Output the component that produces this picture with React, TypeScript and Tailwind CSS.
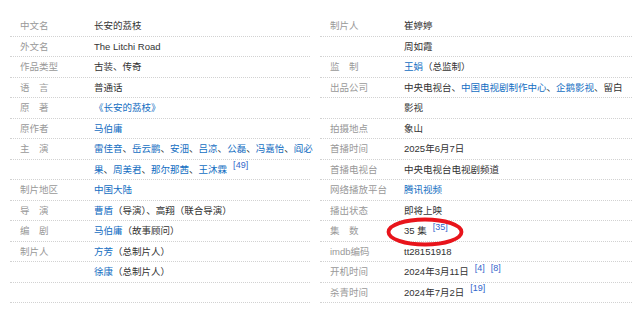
type Part = { t: string; link?: boolean; ref?: string[] };
type Line = { label?: string; parts: Part[]; circled?: boolean };

const L = (t: string): Part => ({ t, link: true });
const T = (t: string): Part => ({ t });

const left: Line[] = [
  { label: "中文名", parts: [T("长安的荔枝")] },
  { label: "外文名", parts: [T("The Litchi Road")] },
  { label: "作品类型", parts: [T("古装、传奇")] },
  { label: "语　言", parts: [T("普通话")] },
  { label: "原　著", parts: [L("《长安的荔枝》")] },
  { label: "原作者", parts: [L("马伯庸")] },
  {
    label: "主　演",
    parts: [L("雷佳音"), T("、"), L("岳云鹏"), T("、"), L("安沺"), T("、"), L("吕凉"), T("、"), L("公磊"), T("、"), L("冯嘉怡"), T("、"), L("阎必")],
  },
  { parts: [L("果"), T("、"), L("周美君"), T("、"), L("那尔那茜"), T("、"), { t: "王沐霖", link: true, ref: ["49"] }] },
  { label: "制片地区", parts: [L("中国大陆")] },
  { label: "导　演", parts: [L("曹盾"), T("（导演）、高翔（联合导演）")] },
  { label: "编　剧", parts: [L("马伯庸"), T("（故事顾问）")] },
  { label: "制片人", parts: [L("方芳"), T("（总制片人）")] },
  { parts: [L("徐康"), T("（总制片人）")] },
  { parts: [] },
];

const right: Line[] = [
  { label: "制片人", parts: [T("崔婷婷")] },
  { parts: [T("周如霞")] },
  { label: "监　制", parts: [L("王娟"), T("（总监制）")] },
  { label: "出品公司", parts: [T("中央电视台、"), L("中国电视剧制作中心"), T("、"), L("企鹅影视"), T("、留白")] },
  { parts: [T("影视")] },
  { label: "拍摄地点", parts: [T("象山")] },
  { label: "首播时间", parts: [T("2025年6月7日")] },
  { label: "首播电视台", parts: [T("中央电视台电视剧频道")] },
  { label: "网络播放平台", parts: [L("腾讯视频")] },
  { label: "播出状态", parts: [T("即将上映")] },
  { label: "集　数", parts: [{ t: "35 集", ref: ["35"] }], circled: true },
  { label: "imdb编码", parts: [T("tt28151918")] },
  { label: "开机时间", parts: [{ t: "2024年3月11日", ref: ["4", "8"] }] },
  { label: "杀青时间", parts: [{ t: "2024年7月2日", ref: ["19"] }] },
];

function Row({ line }: { line: Line }) {
  return (
    <div className="flex h-[20.5px] items-center border-b border-dotted border-[#d2d2d2] pt-[1px]">
      <div className="w-[84px] shrink-0 pl-[10px] text-[#999]">{line.label}</div>
      <div className="relative whitespace-nowrap text-[#333]">
        {line.parts.map((p, i) => (
          <span key={i}>
            <span className={p.link ? "text-[#136ec2]" : ""}>{p.t}</span>
            {p.ref?.map((r) => (
              <sup key={r} className="ml-[6px] text-[9px] text-[#3366cc]">
                [{r}]
              </sup>
            ))}
          </span>
        ))}
        {line.circled && (
          <svg
            className="absolute left-[-18px] top-[-7px]"
            width="78"
            height="30"
            viewBox="0 0 78 30"
          >
            <ellipse cx="39" cy="15" rx="36.5" ry="12.5" fill="none" stroke="#e8141b" strokeWidth="3.8" />
          </svg>
        )}
      </div>
    </div>
  );
}

export default function App() {
  return (
    <div
      className="h-[318px] w-[640px] bg-white pl-[10px] pr-[8px] pt-4 text-[9.5px]"
      style={{ fontFamily: '"Liberation Sans", "Noto Sans CJK SC", sans-serif' }}
    >
      <div className="grid grid-cols-[300px_312px] gap-x-[10px]">
        <div>
          {left.map((l, i) => (
            <Row key={i} line={l} />
          ))}
        </div>
        <div>
          {right.map((l, i) => (
            <Row key={i} line={l} />
          ))}
        </div>
      </div>
    </div>
  );
}
